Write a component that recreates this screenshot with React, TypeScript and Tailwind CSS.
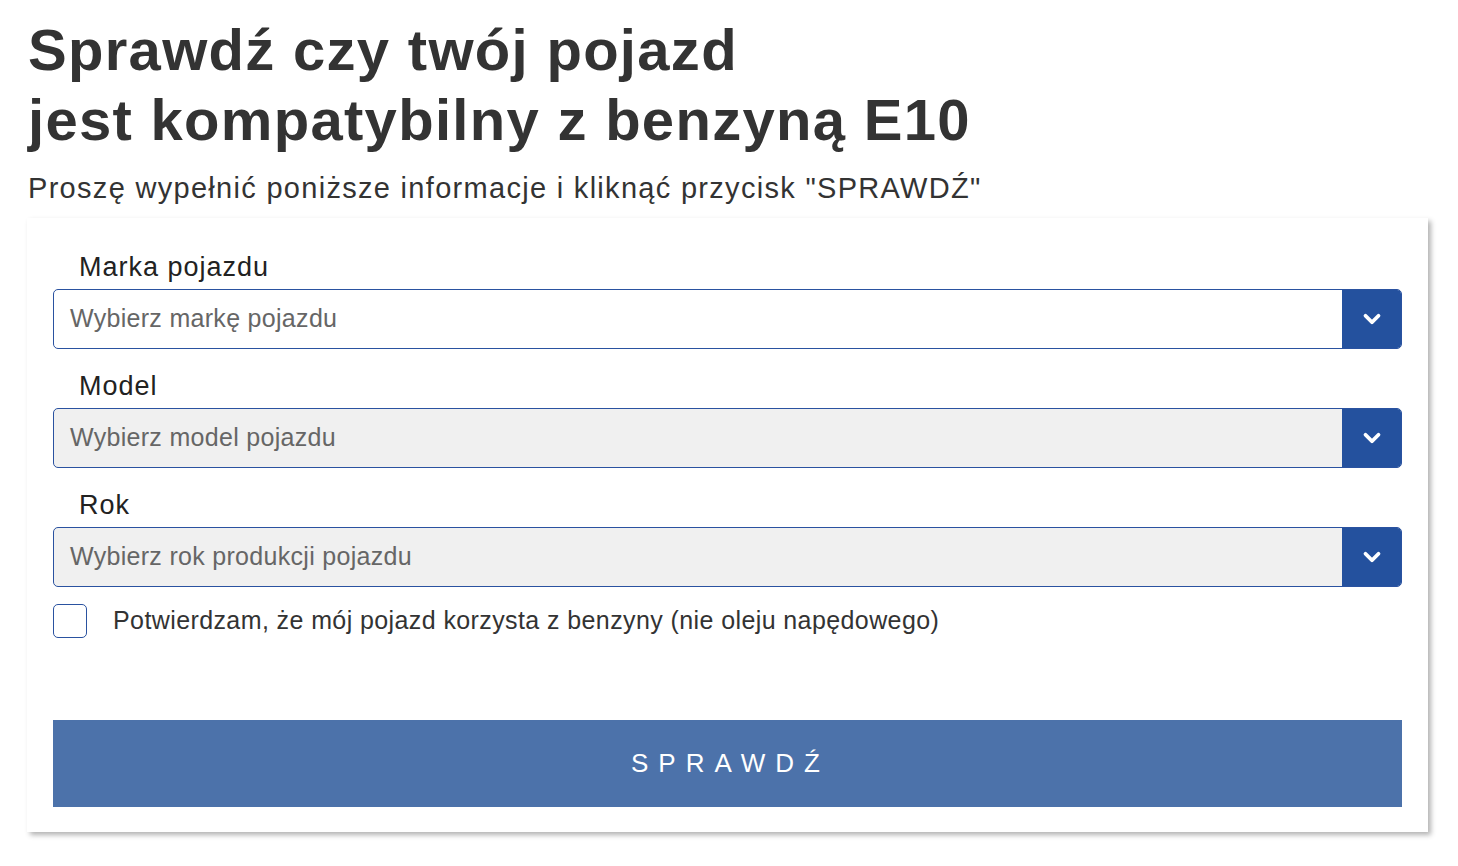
import { ChevronDown } from 'lucide-react';

const fields = [
  { label: 'Marka pojazdu', placeholder: 'Wybierz markę pojazdu', disabled: false },
  { label: 'Model', placeholder: 'Wybierz model pojazdu', disabled: true },
  { label: 'Rok', placeholder: 'Wybierz rok produkcji pojazdu', disabled: true },
];

function SelectField({ label, placeholder, disabled }: { label: string; placeholder: string; disabled: boolean }) {
  return (
    <div className="mt-[20px] first:mt-0">
      <label className="block pl-[26px] mb-[5px] text-[27px] leading-[34px] tracking-[1px] text-[#222]">
        {label}
      </label>
      <div
        className={`flex h-[60px] rounded-[5px] border border-[#2a52a0] overflow-hidden ${
          disabled ? 'bg-[#f0f0f0]' : 'bg-white'
        }`}
      >
        <div className="flex-1 flex items-center pl-[16px] text-[25px] tracking-[0.3px] text-[#666]">
          {placeholder}
        </div>
        <div className="w-[59px] flex items-center justify-center bg-[#24519e]">
          <ChevronDown className="w-[26px] h-[26px] text-white" strokeWidth={3.5} />
        </div>
      </div>
    </div>
  );
}

export default function App() {
  return (
    <div className="min-h-screen bg-white font-['Liberation_Sans',Arial,sans-serif] text-[#333]">
      <div className="pl-[28px] pt-[15px] pr-[30px]">
        <h1 className="text-[58px] leading-[70px] font-bold tracking-[1.3px] text-[#333]">
          Sprawdź czy twój pojazd
          <br />
          jest kompatybilny z benzyną E10
        </h1>
        <p className="mt-[13px] text-[29px] leading-[40px] tracking-[1.3px] text-[#333]">
          Proszę wypełnić poniższe informacje i kliknąć przycisk "SPRAWDŹ"
        </p>
      </div>

      <form className="ml-[27px] mt-[10px] w-[1401px] bg-white px-[26px] pt-[32px] pb-[25px] shadow-[3px_3px_5px_rgba(0,0,0,0.3)]">
        {fields.map((f) => (
          <SelectField key={f.label} {...f} />
        ))}

        <label className="mt-[15px] flex items-center gap-[26px]">
          <span className="w-[34px] h-[34px] rounded-[5px] border border-[#2a52a0] bg-white" />
          <span className="text-[25px] tracking-[0.4px] text-[#333]">
            Potwierdzam, że mój pojazd korzysta z benzyny (nie oleju napędowego)
          </span>
        </label>

        <button
          type="button"
          className="mt-[80px] w-full h-[87px] bg-[#4c72aa] text-white text-[26px] tracking-[10px] pl-[6px]"
        >
          SPRAWDŹ
        </button>
      </form>
    </div>
  );
}
